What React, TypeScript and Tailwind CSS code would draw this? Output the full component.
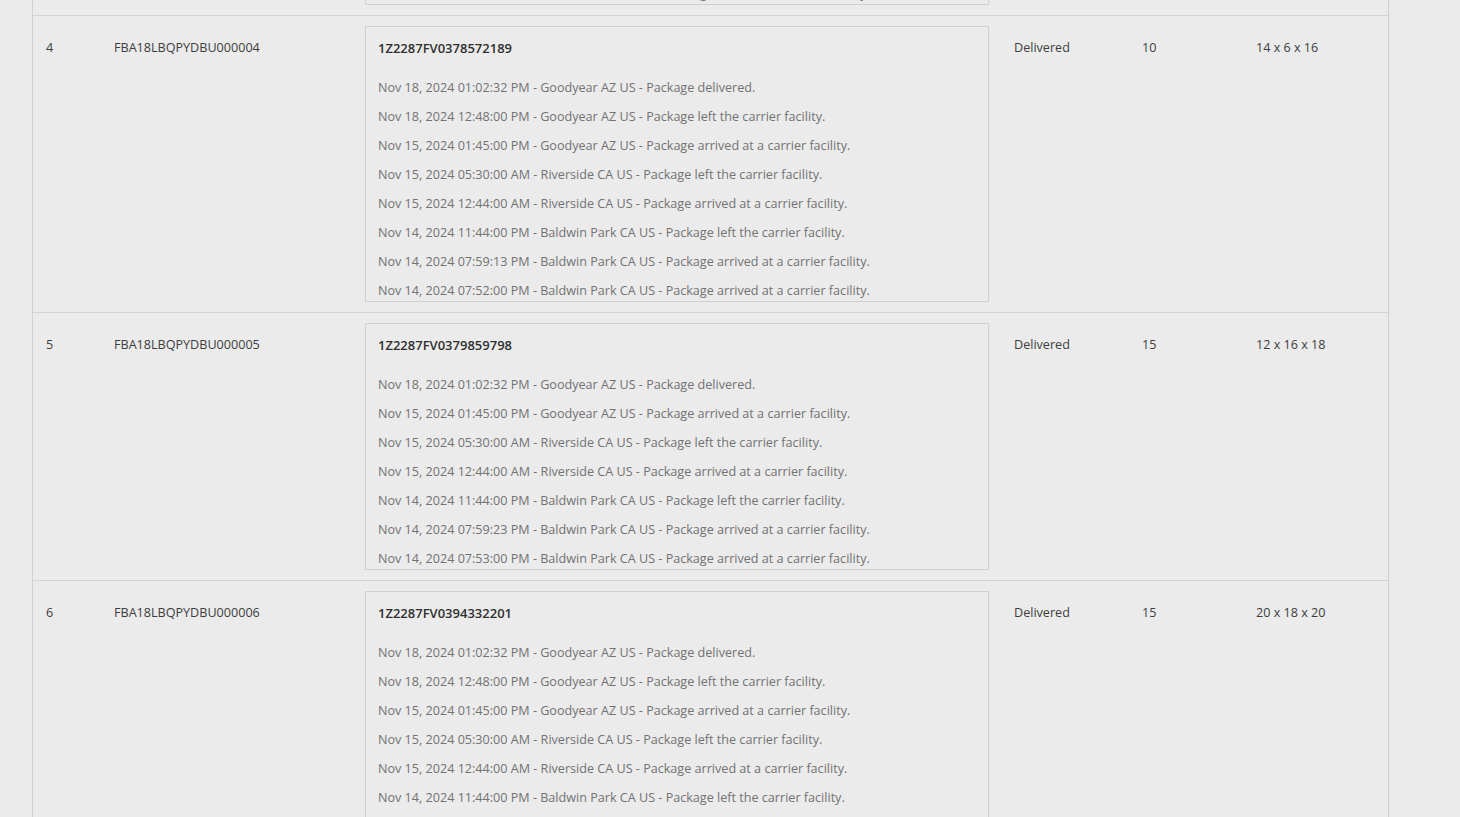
const FONT = "font-['Open_Sans',_'Liberation_Sans',_sans-serif]";

type Shipment = {
  line: string;
  id: string;
  tracking: string;
  status: string;
  qty: string;
  dims: string;
  events: string[];
};

const shipments: Shipment[] = [
  {
    line: "3",
    id: "FBA18LBQPYDBU000003",
    tracking: "1Z2287FV0371234567",
    status: "Delivered",
    qty: "10",
    dims: "14 x 6 x 16",
    events: [
      "Nov 18, 2024 01:02:32 PM - Goodyear AZ US - Package delivered.",
      "Nov 18, 2024 12:48:00 PM - Goodyear AZ US - Package left the carrier facility.",
      "Nov 15, 2024 01:45:00 PM - Goodyear AZ US - Package arrived at a carrier facility.",
      "Nov 15, 2024 05:30:00 AM - Riverside CA US - Package left the carrier facility.",
      "Nov 15, 2024 12:44:00 AM - Riverside CA US - Package arrived at a carrier facility.",
      "Nov 14, 2024 11:44:00 PM - Baldwin Park CA US - Package left the carrier facility.",
      "Nov 14, 2024 07:59:13 PM - Baldwin Park CA US - Package arrived at a carrier facility.",
      "Nov 14, 2024 07:52:00 PM - Baldwin Park CA US - Package arrived at a carrier facility.",
    ],
  },
  {
    line: "4",
    id: "FBA18LBQPYDBU000004",
    tracking: "1Z2287FV0378572189",
    status: "Delivered",
    qty: "10",
    dims: "14 x 6 x 16",
    events: [
      "Nov 18, 2024 01:02:32 PM - Goodyear AZ US - Package delivered.",
      "Nov 18, 2024 12:48:00 PM - Goodyear AZ US - Package left the carrier facility.",
      "Nov 15, 2024 01:45:00 PM - Goodyear AZ US - Package arrived at a carrier facility.",
      "Nov 15, 2024 05:30:00 AM - Riverside CA US - Package left the carrier facility.",
      "Nov 15, 2024 12:44:00 AM - Riverside CA US - Package arrived at a carrier facility.",
      "Nov 14, 2024 11:44:00 PM - Baldwin Park CA US - Package left the carrier facility.",
      "Nov 14, 2024 07:59:13 PM - Baldwin Park CA US - Package arrived at a carrier facility.",
      "Nov 14, 2024 07:52:00 PM - Baldwin Park CA US - Package arrived at a carrier facility.",
    ],
  },
  {
    line: "5",
    id: "FBA18LBQPYDBU000005",
    tracking: "1Z2287FV0379859798",
    status: "Delivered",
    qty: "15",
    dims: "12 x 16 x 18",
    events: [
      "Nov 18, 2024 01:02:32 PM - Goodyear AZ US - Package delivered.",
      "Nov 15, 2024 01:45:00 PM - Goodyear AZ US - Package arrived at a carrier facility.",
      "Nov 15, 2024 05:30:00 AM - Riverside CA US - Package left the carrier facility.",
      "Nov 15, 2024 12:44:00 AM - Riverside CA US - Package arrived at a carrier facility.",
      "Nov 14, 2024 11:44:00 PM - Baldwin Park CA US - Package left the carrier facility.",
      "Nov 14, 2024 07:59:23 PM - Baldwin Park CA US - Package arrived at a carrier facility.",
      "Nov 14, 2024 07:53:00 PM - Baldwin Park CA US - Package arrived at a carrier facility.",
    ],
  },
  {
    line: "6",
    id: "FBA18LBQPYDBU000006",
    tracking: "1Z2287FV0394332201",
    status: "Delivered",
    qty: "15",
    dims: "20 x 18 x 20",
    events: [
      "Nov 18, 2024 01:02:32 PM - Goodyear AZ US - Package delivered.",
      "Nov 18, 2024 12:48:00 PM - Goodyear AZ US - Package left the carrier facility.",
      "Nov 15, 2024 01:45:00 PM - Goodyear AZ US - Package arrived at a carrier facility.",
      "Nov 15, 2024 05:30:00 AM - Riverside CA US - Package left the carrier facility.",
      "Nov 15, 2024 12:44:00 AM - Riverside CA US - Package arrived at a carrier facility.",
      "Nov 14, 2024 11:44:00 PM - Baldwin Park CA US - Package left the carrier facility.",
      "Nov 14, 2024 07:59:13 PM - Baldwin Park CA US - Package arrived at a carrier facility.",
      "Nov 14, 2024 07:52:00 PM - Baldwin Park CA US - Package arrived at a carrier facility.",
    ],
  },
];

function ShipmentRow({ s }: { s: Shipment }) {
  return (
    <div className="grid grid-cols-[81px_251px_649px_128px_114px_1fr] border-b border-[#d3d3d3] py-[10px] text-[12.6px] leading-[20px] text-[#3d3d3d]">
      <div className="pl-[13px] pt-[12px]">{s.line}</div>
      <div className="pt-[12px]">{s.id}</div>
      <div className="w-[624px] border border-[#d0d0d0] px-[12px] pt-[11px]">
        <div className="mb-[20px] text-[13px] font-semibold text-[#2f2f2f]">{s.tracking}</div>
        {s.events.map((e, i) => (
          <div key={i} className="mt-[9px] whitespace-nowrap text-[#727272]">
            {e}
          </div>
        ))}
      </div>
      <div className="pt-[12px]">{s.status}</div>
      <div className="pt-[12px]">{s.qty}</div>
      <div className="pt-[12px]">{s.dims}</div>
    </div>
  );
}

export default function App() {
  return (
    <div className={`h-[817px] w-full overflow-hidden bg-[#ebebeb] ${FONT}`}>
      <div className="-mt-[281px] ml-[32px] w-[1357px] border-x border-[#d0d0d0]">
        {shipments.map((s) => (
          <ShipmentRow key={s.id} s={s} />
        ))}
      </div>
    </div>
  );
}
